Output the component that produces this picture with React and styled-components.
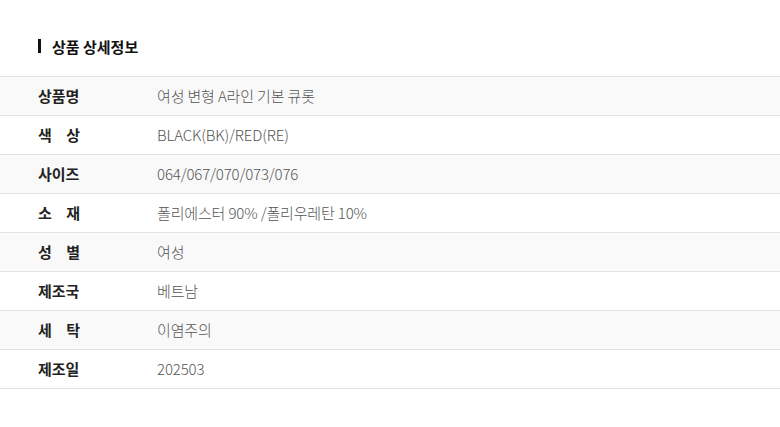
import React from 'react';
import styled, { createGlobalStyle } from 'styled-components';

const GlobalStyle = createGlobalStyle`
  body {
    margin: 0;
    background: #fff;
    font-family: "Noto Sans CJK KR", "Noto Sans", sans-serif;
  }
`;

const Section = styled.section`
  padding-top: 36px;
`;

const Heading = styled.h2`
  display: flex;
  align-items: center;
  gap: 11px;
  margin: 0 0 20px 38px;
  height: 20px;
  font-size: 15px;
  font-weight: 700;
  color: #111;

  &::before {
    content: '';
    width: 3px;
    height: 14px;
    background: #111;
  }
`;

const Table = styled.div`
  border-top: 1px solid #e3e3e3;
`;

const Row = styled.div`
  display: flex;
  align-items: center;
  height: 38px;
  border-bottom: 1px solid #e3e3e3;
  background: ${p => (p.$shaded ? '#f9f9f9' : '#fff')};
`;

const Label = styled.div`
  width: 42px;
  margin-left: 38px;
  margin-top: -2px;
  font-size: 15px;
  font-weight: 700;
  color: #222;
  text-align: justify;
  text-align-last: justify;
  white-space: nowrap;
`;

const Value = styled.div`
  margin-left: 77px;
  margin-top: -2px;
  font-size: 15px;
  font-weight: 300;
  color: #555;
  letter-spacing: -0.15px;
`;

const rows = [
  ['상품명', '여성 변형 A라인 기본 큐롯'],
  ['색 상', 'BLACK(BK)/RED(RE)'],
  ['사이즈', '064/067/070/073/076'],
  ['소 재', '폴리에스터 90% /폴리우레탄 10%'],
  ['성 별', '여성'],
  ['제조국', '베트남'],
  ['세 탁', '이염주의'],
  ['제조일', '202503'],
];

export default function App() {
  return (
    <>
      <GlobalStyle />
      <Section>
        <Heading>상품 상세정보</Heading>
        <Table>
          {rows.map(([label, value], i) => (
            <Row key={label} $shaded={i % 2 === 0}>
              <Label>{label}</Label>
              <Value>{value}</Value>
            </Row>
          ))}
        </Table>
      </Section>
    </>
  );
}
